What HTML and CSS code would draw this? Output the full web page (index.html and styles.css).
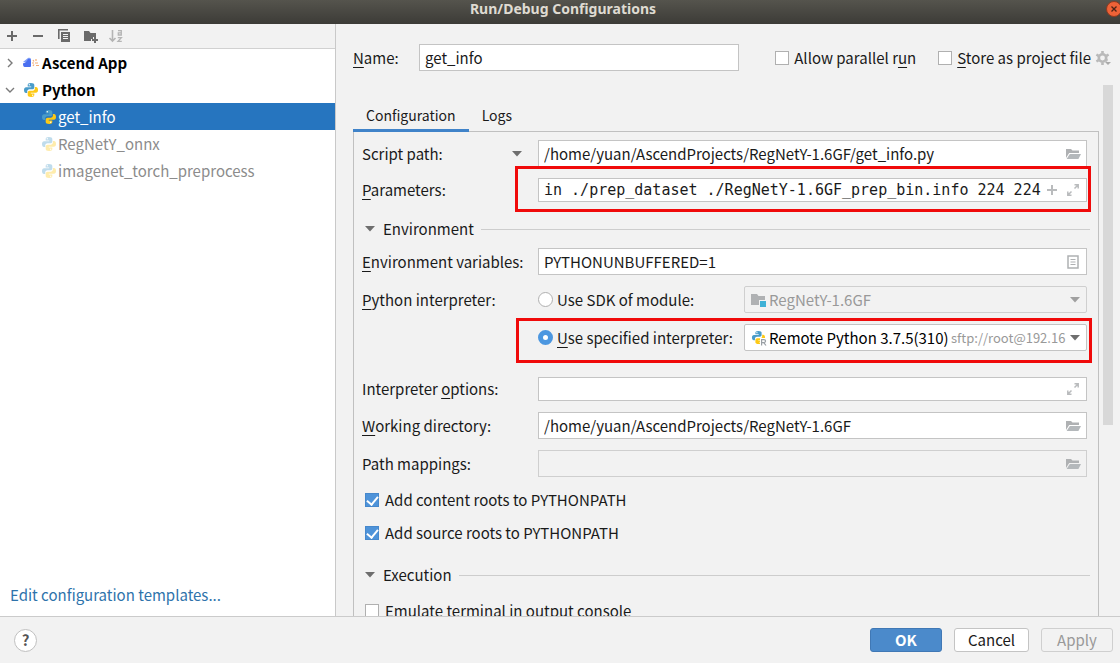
FILE: index.html
```html
<!DOCTYPE html>
<html lang="en">
<head>
<meta charset="utf-8">
<title>Run/Debug Configurations</title>
<link rel="stylesheet" href="styles.css">
</head>
<body>
<svg class="defs" aria-hidden="true">
  <symbol id="python" viewBox="0 0 16 16">
    <path fill="#4a9cc9" d="M7.8 1C5.6 1 4.7 1.8 4.7 3v1.6h3.5v.6H3.1C1.800 5.200 1 6.300 1 8s.8 3 2 3h1.200V9.400c0-1.200 1-2.200 2.200-2.200h3.100c1 0 1.800-.8 1.800-1.800V3c0-1.200-1-2-3.500-2z"/>
    <path fill="#fdc915" d="M8.200 15c2.200 0 3.100-.8 3.100-2v-1.600H7.800v-.6h5.100C14.200 10.800 15 9.700 15 8s-.8-3-2-3h-1.100v1.600c0 1.200-1 2.200-2.200 2.200H6.600c-1 0-1.900.8-1.900 1.800V13c0 1.200 1 2 3.500 2z"/>
    <circle cx="6.300" cy="2.800" r=".7" fill="#fff"/><circle cx="9.700" cy="13.200" r=".7" fill="#fff"/>
  </symbol>
  <symbol id="folder-open" viewBox="0 0 16 16">
    <path fill="#afb1b3" d="M1 3h5l1.500 1.500H14V7H4.200L1 12z"/><path fill="#b4b8bb" d="M4.800 8H16l-2.600 5H1.600z"/>
  </symbol>
  <symbol id="expand" viewBox="0 0 14 14">
    <path fill="none" stroke="#b9bbbd" stroke-width="1.500" d="M8.500 5.500l3-3M8.500 1.800h3.700v3.700M5.500 8.500l-3 3M1.800 8.500v3.700h3.700"/>
  </symbol>
  <symbol id="caret" viewBox="0 0 10 6"><path fill="currentColor" d="M0 0h10L5 5.500z"/></symbol>
</svg>

<div class="dialog">
  <header class="titlebar">
    <h1 class="title">Run/Debug Configurations</h1>
    <button class="close" type="button" aria-label="Close"><svg viewBox="0 0 16 16" width="16" height="16"><circle cx="8" cy="8" r="7.500" fill="#ed6237" stroke="#8d3a20"/><path d="M5.500 5.500l5 5m0-5l-5 5" stroke="#4b2416" stroke-width="1.300"/></svg></button>
  </header>

  <div class="body">
    <aside class="sidebar">
      <div class="toolbar">
        <button class="tool" type="button" aria-label="Add"><svg viewBox="0 0 16 16"><path stroke="#6a6a6a" stroke-width="2" d="M8 3v10M3 8h10"/></svg></button>
        <button class="tool" type="button" aria-label="Remove"><svg viewBox="0 0 16 16"><path stroke="#6a6a6a" stroke-width="2" d="M3 8h10"/></svg></button>
        <button class="tool" type="button" aria-label="Copy"><svg viewBox="0 0 16 16"><path fill="none" stroke="#6a6a6a" stroke-width="1.600" d="M2.800 11V1.800H12"/><path fill="#6a6a6a" d="M5 4h9v10H5z"/><path stroke="#f2f2f2" d="M7 6.500h5M7 8.500h5M7 10.500h5"/></svg></button>
        <button class="tool" type="button" aria-label="New folder"><svg viewBox="0 0 16 16"><path fill="#6a6a6a" d="M2 3h5l1.500 2H14v4h-3v2H9v2H2z"/><path stroke="#6a6a6a" stroke-width="2" d="M13 9v6M10 12h6"/></svg></button>
        <button class="tool" type="button" aria-label="Sort" disabled><svg viewBox="0 0 16 16"><path fill="none" stroke="#b4b4b4" stroke-width="1.600" d="M4.500 2v11M1.500 10l3 3 3-3"/><path fill="none" stroke="#b4b4b4" stroke-width="1.300" d="M10 2.600h3.300V7H10.300V4.800h3M9.800 9.700h3.600L10 13.400h3.800"/></svg></button>
      </div>
      <ul class="tree">
        <li class="node group"><svg class="chevron" viewBox="0 0 10 10"><path d="M3 1l4 4-4 4"/></svg>
          <svg class="icon" viewBox="0 0 16 16"><path fill="#7d9cf8" d="M0 7l5-4c2-.5 3 0 3 2L5 8z"/><path fill="#4a6ff0" d="M0 8c2 1 4-2 5-4 2 0 3 0 3 2v5c0 1-1 1-2 1H2c-2 0-2-2-2-4z"/><path stroke="#f3ab74" stroke-width="1.200" d="M9 8h2M12 8h3M10 5l1 1.500M13 4v2M10 11l1-1.500M13 10.500h3"/></svg>
          <span>Ascend App</span></li>
        <li class="node group"><svg class="chevron" viewBox="0 0 10 10"><path d="M1 3l4 4 4-4"/></svg>
          <svg class="icon"><use href="#python"/></svg><span>Python</span></li>
        <li class="node leaf selected"><svg class="icon"><use href="#python"/></svg><span>get_info</span></li>
        <li class="node leaf temporary"><svg class="icon"><use href="#python"/></svg><span>RegNetY_onnx</span></li>
        <li class="node leaf temporary"><svg class="icon"><use href="#python"/></svg><span>imagenet_torch_preprocess</span></li>
      </ul>
      <a class="templates" href="#">Edit configuration templates...</a>
    </aside>

    <main class="main">
      <div class="name-row">
        <label class="name-label" for="name"><u>N</u>ame:</label>
        <input class="name-input" id="name" type="text" value="get_info">
        <label class="check"><input class="box" type="checkbox"><span>Allow parallel r<u>u</u>n</span></label>
        <label class="check"><input class="box" type="checkbox"><span><u>S</u>tore as project file</span></label>
        <button class="gear" type="button" aria-label="Storage options"><svg viewBox="0 0 16 16" width="16" height="16"><circle cx="7.500" cy="8" r="3.700" fill="none" stroke="#b9b9b9" stroke-width="2.600"/><path stroke="#b9b9b9" stroke-width="2.600" d="M7.500 1v2.500M7.500 12.500V15M1.400 4.500l2.200 1.300M11.400 10.200l1 .6M1.400 11.500l2.200-1.300M11.400 5.800l2.200-1.300"/><path fill="#aaa" d="M10 12h6l-3 3z"/></svg></button>
      </div>

      <div class="scroll-row">
        <div class="content">
          <div class="tabs" role="tablist">
            <button class="tab active" type="button" role="tab" aria-selected="true">Configuration</button>
            <button class="tab" type="button" role="tab" aria-selected="false">Logs</button>
          </div>
          <div class="panel">
            <div class="row">
              <label class="label with-caret" for="script">Script path:<svg class="caret"><use href="#caret"/></svg></label>
              <div class="field"><input id="script" type="text" value="/home/yuan/AscendProjects/RegNetY-1.6GF/get_info.py"><svg class="icon"><use href="#folder-open"/></svg></div>
            </div>
            <div class="row">
              <label class="label" for="params"><u>P</u>arameters:</label>
              <div class="marked">
                <div class="field short"><input class="mono" id="params" type="text" value="in ./prep_dataset ./RegNetY-1.6GF_prep_bin.info 224 224"><svg class="small-icon" viewBox="0 0 14 14"><path stroke="#b9bbbd" stroke-width="2" d="M7 2v10M2 7h10"/></svg><svg class="small-icon"><use href="#expand"/></svg></div>
                <div class="highlight params-highlight"></div>
              </div>
            </div>
            <h2 class="section"><svg class="caret"><use href="#caret"/></svg>Environment</h2>
            <div class="row">
              <label class="label" for="env"><u>E</u>nvironment variables:</label>
              <div class="field"><input id="env" type="text" value="PYTHONUNBUFFERED=1"><svg class="small-icon" viewBox="0 0 14 14"><path fill="none" stroke="#afb1b3" stroke-width="1.500" d="M2 1h10v12H2z"/><path stroke="#afb1b3" d="M4.500 4.500h5M4.500 7h5M4.500 9.500h5"/></svg></div>
            </div>
            <div class="row">
              <span class="label"><u>P</u>ython interpreter:</span>
              <div class="choice">
                <label class="check"><input class="radio" type="radio" name="interp"><span>Use SDK of module:</span></label>
                <div class="combo disabled"><svg class="icon" viewBox="0 0 16 16"><path fill="#afb1b3" d="M0 2h6l1.500 2H14v4H8v5H0z"/><path fill="#3fb1d6" d="M9 9h6v6H9z"/></svg><select aria-label="Module" disabled><option>RegNetY-1.6GF</option></select><span class="detail"></span><svg class="caret"><use href="#caret"/></svg></div>
              </div>
            </div>
            <div class="row gap-after">
              <span class="label"></span>
              <div class="choice marked">
                <label class="check"><input class="radio" type="radio" name="interp" checked><span><u>U</u>se specified interpreter:</span></label>
                <div class="combo"><svg class="icon" viewBox="0 0 16 16"><use href="#python" width="15" height="15"/><path fill="#fff" d="M9 8h7v8H9z"/><path fill="none" stroke="#9aa0a5" stroke-width="1.200" d="M10.600 15.500V9.600h2.200c2.400 0 2.400 3 0 3h-2.200M12.700 12.600l2.300 2.900"/></svg><select aria-label="Interpreter"><option>Remote Python 3.7.5(310)</option></select><span class="detail">sftp://root@192.16</span><svg class="caret"><use href="#caret"/></svg></div>
                <div class="highlight interpreter-highlight"></div>
              </div>
            </div>
            <div class="row">
              <label class="label" for="options">Interpreter <u>o</u>ptions:</label>
              <div class="field short"><input id="options" type="text"><svg class="small-icon"><use href="#expand"/></svg></div>
            </div>
            <div class="row">
              <label class="label" for="workdir"><u>W</u>orking directory:</label>
              <div class="field"><input id="workdir" type="text" value="/home/yuan/AscendProjects/RegNetY-1.6GF"><svg class="icon"><use href="#folder-open"/></svg></div>
            </div>
            <div class="row">
              <label class="label" for="mappings">Path mappings:</label>
              <div class="field disabled"><input id="mappings" type="text" readonly><svg class="icon"><use href="#folder-open"/></svg></div>
            </div>
            <label class="check option"><input class="box" type="checkbox" checked><span>Add content roots to PYTHONPATH</span></label>
            <label class="check option"><input class="box" type="checkbox" checked><span>Add source roots to PYTHONPATH</span></label>
            <h2 class="section spaced"><svg class="caret"><use href="#caret"/></svg>Execution</h2>
            <label class="check option"><input class="box" type="checkbox"><span>Emulate terminal in output console</span></label>
          </div>
        </div>
        <div class="scrollbar"><div class="thumb"></div></div>
      </div>
    </main>
  </div>

  <footer class="footer">
    <button class="help" type="button" aria-label="Help">?</button>
    <button class="button primary" type="button">OK</button>
    <button class="button" type="button">Cancel</button>
    <button class="button" type="button" disabled>Apply</button>
  </footer>
</div>
</body>
</html>
```
FILE: styles.css
```css
* { box-sizing: border-box; }

body {
  margin: 0;
  font: 15px/24px "Noto Sans CJK SC", "Noto Sans", sans-serif;
  color: #1a1a1a;
  background: #f2f2f2;
}

button, input, select { font: inherit; color: inherit; margin: 0; padding: 0; }
button { border: 0; background: none; }
u { text-decoration-thickness: 1px; text-underline-offset: 3px; }
svg { display: block; flex: none; }

.defs { position: absolute; width: 0; height: 0; }
.icon { width: 16px; height: 16px; }
.small-icon { width: 14px; height: 14px; }
.caret { width: 10px; height: 6px; color: #6e6e6e; }

.dialog { display: flex; flex-direction: column; height: 100vh; overflow: hidden; }

/* Title bar */
.titlebar {
  display: flex;
  align-items: center;
  flex: none;
  height: 24px;
  padding-left: 20px;
  background: linear-gradient(#55544d, #3c3b37);
  overflow: hidden;
}
.title {
  flex: 1;
  margin: 0;
  padding-bottom: 6px;
  text-align: center;
  font: bold 14px/18px "Noto Sans", sans-serif;
  color: #dfdbd2;
}
.close { margin: 0 -2px 6px 0; }

.body { display: flex; flex: 1; min-height: 0; }

/* Sidebar */
.sidebar {
  display: flex;
  flex-direction: column;
  flex: none;
  width: 30%;
  background: #fff;
  border-right: 1px solid #c9c9c9;
}
.toolbar {
  display: flex;
  align-items: center;
  gap: 10px;
  height: 25px;
  padding-left: 4px;
  background: #f2f2f2;
  border-bottom: 1px solid #d1d1d1;
}
.tool, .tool svg { width: 16px; height: 16px; }
.tree { flex: 1; margin: 0; padding: 0; list-style: none; }
.node { display: flex; align-items: center; height: 27px; }
.group { padding-left: 5px; font-weight: bold; color: #000; gap: 3px; }
.chevron { width: 10px; height: 10px; margin-right: 5px; fill: none; stroke: #7a7a7a; stroke-width: 1.400; }
.leaf { padding-left: 41px; gap: 1px; }
.selected { background: #2675bf; color: #fff; }
.temporary { color: #8c8c8c; }
.temporary .icon { opacity: .35; }
.templates { padding: 0 10px 9px; color: #2e73ab; text-decoration: none; }

/* Main column */
.main { display: flex; flex-direction: column; flex: 1; min-width: 0; padding: 20px 7px 0 17px; }
.name-row { display: flex; align-items: center; height: 27px; flex: none; }
.name-label { width: 66px; }
.name-input {
  flex: 1;
  min-width: 0;
  height: 27px;
  margin-right: 36px;
  padding: 0 5px;
  border: 1px solid #c4c4c4;
  background: #fff;
}
.check { display: flex; align-items: center; gap: 6px; white-space: nowrap; }
.name-row .check { gap: 5px; }
.name-row .check + .check { margin-left: 22px; }
.gear { margin: 0 2px 0 4px; }

.box, .radio { appearance: none; flex: none; display: grid; place-items: center; border: 1px solid #b0b0b0; background: #fff; }
.box { width: 14px; height: 14px; }
.box:checked { background: #4e93d9; border-color: #4688cc; }
.box:checked::after {
  content: "";
  width: 5px;
  height: 9px;
  margin-bottom: 2px;
  border: solid #fff;
  border-width: 0 2px 2px 0;
  transform: rotate(40deg);
}
.radio { width: 15px; height: 15px; border-radius: 50%; }
.radio:checked { border: 5px solid #4c97e0; }

.scroll-row { display: flex; flex: 1; min-height: 0; margin-top: 14px; gap: 4px; }
.content { flex: 1; min-width: 0; overflow: hidden; }
.scrollbar { width: 10px; }
.thumb { height: 64%; background: #d8d8d8; }

.tabs { display: flex; padding-top: 14px; }
.tab { height: 33px; padding: 1px 13px 0; border-bottom: 3px solid transparent; font-size: 14px; }
.tab.active { border-bottom-color: #4083c9; }
.panel {
  margin-top: -1px;
  padding: 8px 11px 0 8px;
  border: 1px solid #c0c0c0;
}

/* Form rows */
.row { display: grid; grid-template-columns: 176px minmax(0, 1fr); align-items: center; margin-bottom: 11px; }
.gap-after { margin-bottom: 26px; }
.label { white-space: nowrap; }
.with-caret { display: flex; align-items: center; justify-content: space-between; padding-right: 16px; }
.field, .combo {
  display: flex;
  align-items: center;
  height: 27px;
  padding: 0 5px;
  border: 1px solid #c4c4c4;
  background: #fff;
}
.field.short { height: 24px; }
.field.disabled, .combo.disabled { background: #f2f2f2; border-color: #cfcfcf; }
.field input { flex: 1; min-width: 0; border: 0; outline: 0; background: none; }
.field .small-icon { margin: 0 1px 0 6px; }
.field .mono + .small-icon { margin-left: 2px; }
.mono { font-family: "DejaVu Sans Mono", monospace; font-size: 15px; }
.choice { display: grid; grid-template-columns: 206px minmax(0, 1fr); align-items: center; }
.choice .check { gap: 4px; }
.combo { border-radius: 2px; gap: 2px; padding: 0 6px; }
.combo select { appearance: none; border: 0; background: none; color: #000; opacity: 1; }
.combo.disabled select { color: #999; }
.combo.disabled .caret { color: #a0a0a0; }
.detail { flex: 1; min-width: 0; overflow: hidden; white-space: nowrap; font-size: 13px; color: #999; }

.marked { position: relative; }
.highlight { position: absolute; border: 3px solid #f00a0a; pointer-events: none; }
.params-highlight { inset: -12px -4px -10px -23px; }
.interpreter-highlight { inset: -6px -5px -12px -22px; }

.section {
  display: flex;
  align-items: center;
  height: 32px;
  margin: 0 -3px 3px 3px;
  font-size: 15px;
  font-weight: normal;
}
.section .caret { margin-right: 8px; }
.section::after { content: ""; flex: 1; height: 1px; margin-left: 7px; background: #cdcdcd; }
.section.spaced { margin-top: 15px; margin-bottom: 8px; }
.option { height: 23px; margin: 0 0 10px 3px; }

/* Footer */
.footer {
  display: flex;
  align-items: center;
  flex: none;
  gap: 12px;
  height: 47px;
  padding: 0 7px 0 14px;
  border-top: 1px solid #cbcbcb;
}
.help {
  width: 23px;
  height: 23px;
  margin-right: auto;
  border: 1px solid #c0c0c0;
  border-radius: 50%;
  background: #fff;
  line-height: 20px;
  font-weight: bold;
  color: #555;
}
.button { min-width: 72px; height: 24px; padding: 0 13px; border: 1px solid #c4c4c4; border-radius: 3px; background: #fff; line-height: 22px; }
.button:disabled { background: none; color: #999; border-color: #cfcfcf; }
.button.primary { background: #4b8acb; border-color: #4078b5; color: #fff; font-weight: bold; }
```
